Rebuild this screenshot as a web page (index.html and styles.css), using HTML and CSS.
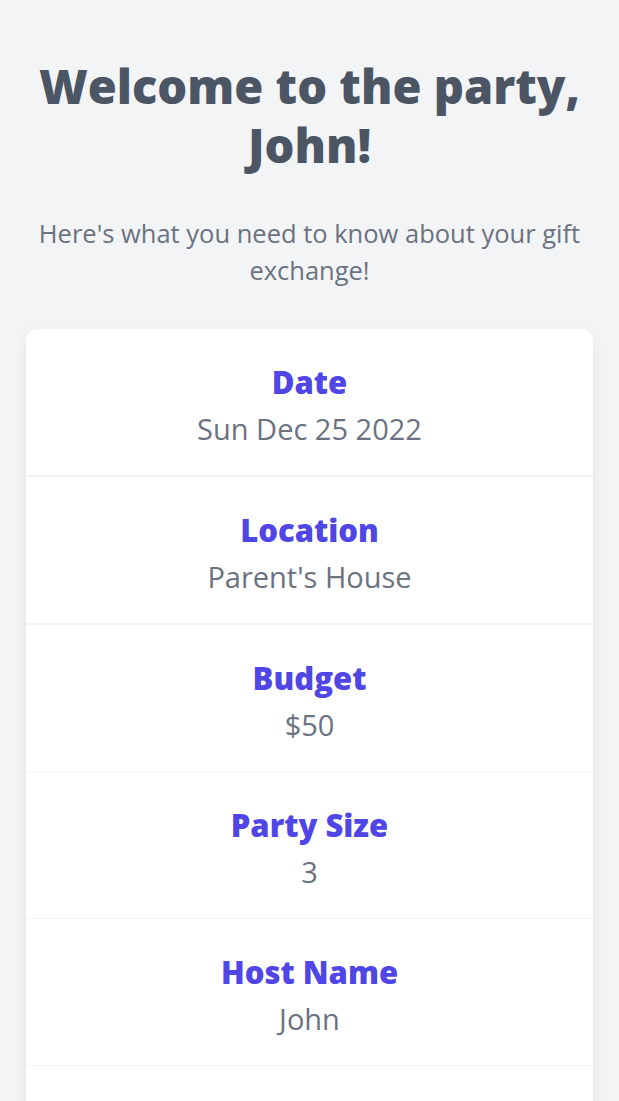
FILE: index.html
```html
<!DOCTYPE html>
<html lang="en">
<head>
<meta charset="utf-8">
<title>Gift Exchange</title>
<link rel="stylesheet" href="styles.css">
</head>
<body>
<main class="page">
  <header class="intro">
    <h1 class="title">Welcome to the party, John!</h1>
    <p class="subtitle">Here's what you need to know about your gift exchange!</p>
  </header>
  <section class="card">
    <div class="row row-strong">
      <h2 class="label">Date</h2>
      <p class="value">Sun Dec 25 2022</p>
    </div>
    <div class="row row-strong">
      <h2 class="label">Location</h2>
      <p class="value">Parent's House</p>
    </div>
    <div class="row">
      <h2 class="label">Budget</h2>
      <p class="value">$50</p>
    </div>
    <div class="row">
      <h2 class="label">Party Size</h2>
      <p class="value">3</p>
    </div>
    <div class="row">
      <h2 class="label">Host Name</h2>
      <p class="value">John</p>
    </div>
  </section>
</main>
</body>
</html>
```

FILE: styles.css
```css
* { box-sizing: border-box; }
html, body { margin: 0; padding: 0; }
body {
  background: #f3f4f6;
  font-family: "Open Sans", "Noto Sans", "Liberation Sans", sans-serif;
}
.page {
  padding: 57px 26px 40px;
}
.intro {
  text-align: center;
  padding: 0;
}
.title {
  margin: 0;
  font-size: 47px;
  line-height: 59px;
  font-weight: 800;
  color: #4b5563;
}
.subtitle {
  margin: 40px -6px 40px;
  font-size: 25.5px;
  line-height: 37px;
  color: #6b7280;
}
.card {
  background: #ffffff;
  border-radius: 12px;
  box-shadow: 0 10px 15px -3px rgba(0,0,0,0.08), 0 4px 6px -4px rgba(0,0,0,0.08), 0 0 14px rgba(0,0,0,0.03);
  overflow: hidden;
  padding-bottom: 60px;
}
.row {
  display: flex;
  flex-direction: column;
  align-items: center;
  gap: 7px;
  padding: 33px 16px 26px;
  border-bottom: 1px solid #f3f4f6;
  text-align: center;
}
.row-strong {
  border-bottom-width: 2px;
}
.label {
  margin: 0;
  font-size: 31px;
  line-height: 40px;
  font-weight: 800;
  color: #4f46e5;
}
.value {
  margin: 0;
  font-size: 29px;
  line-height: 40px;
  color: #6b7280;
}
```
